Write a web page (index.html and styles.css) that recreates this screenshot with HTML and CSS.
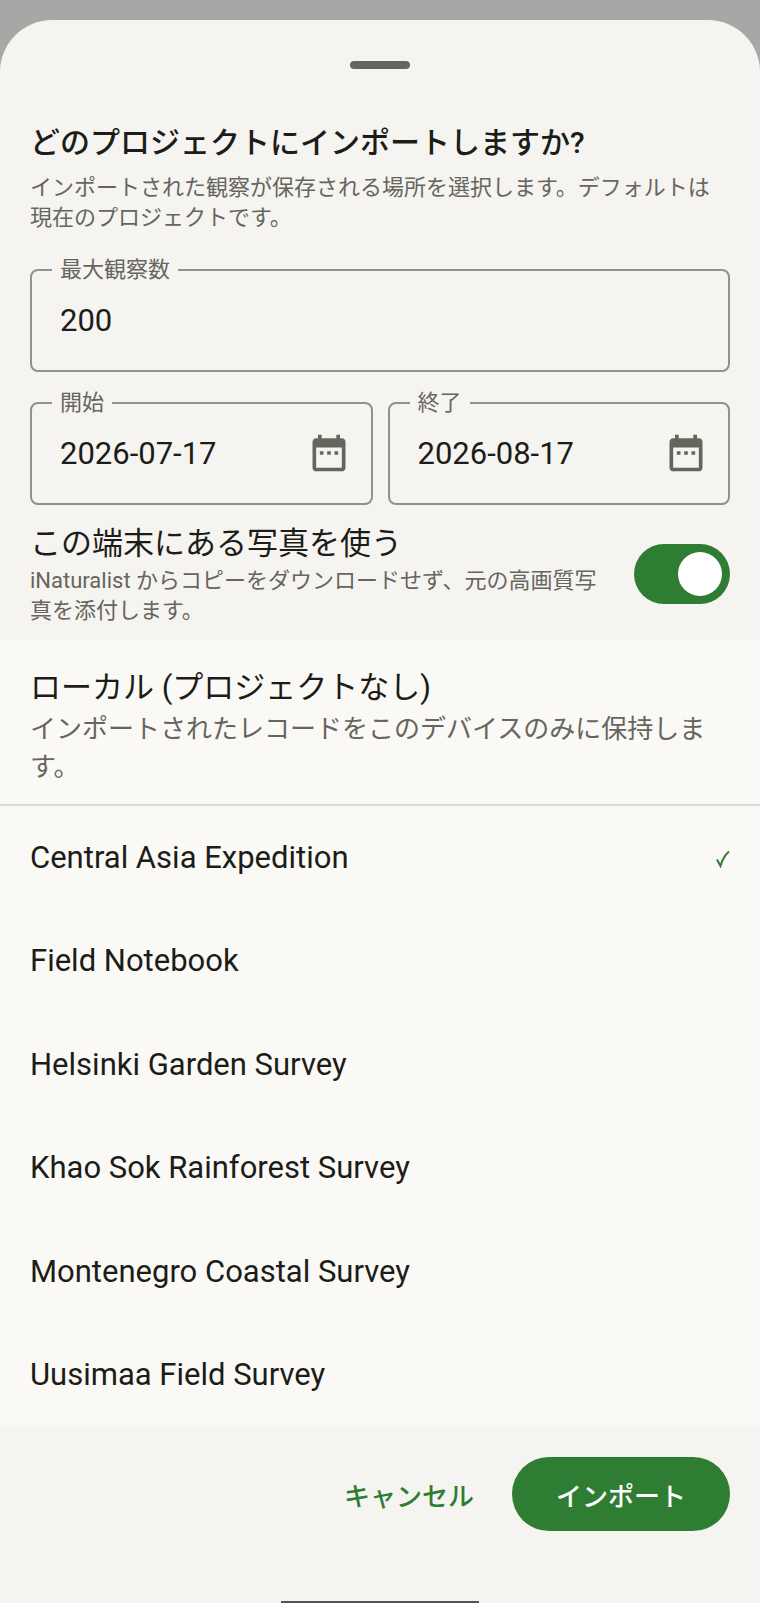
FILE: index.html
```html
<!DOCTYPE html>
<html lang="ja">
<head>
	<meta charset="UTF-8">
	<meta name="viewport" content="width=device-width, initial-scale=1">
	<title>インポート先のプロジェクト</title>
	<link rel="stylesheet" href="styles.css">
</head>
<body>
	<form class="sheet">
		<div class="handle"></div>

		<div class="head">
			<h1>どのプロジェクトにインポートしますか?</h1>
			<p class="small">インポートされた観察が保存される場所を選択します。デフォルトは現在のプロジェクトです。</p>
		</div>

		<div class="fields">
			<fieldset class="field">
				<legend><label for="max">最大観察数</label></legend>
				<input type="text" id="max" inputmode="numeric" value="200">
			</fieldset>
			<div class="dates">
				<fieldset class="field">
					<legend><label for="start">開始</label></legend>
					<input type="text" id="start" value="2026-07-17">
					<button type="button" class="cal" aria-label="開始日を選択">
						<svg viewBox="0 0 24 24"><path d="M9 11H7v2h2v-2zm4 0h-2v2h2v-2zm4 0h-2v2h2v-2zm2-7h-1V2h-2v2H8V2H6v2H5c-1.11 0-1.99.9-1.99 2L3 20c0 1.1.89 2 2 2h14c1.1 0 2-.9 2-2V6c0-1.1-.9-2-2-2zm0 16H5V9h14v11z"/></svg>
					</button>
				</fieldset>
				<fieldset class="field">
					<legend><label for="end">終了</label></legend>
					<input type="text" id="end" value="2026-08-17">
					<button type="button" class="cal" aria-label="終了日を選択">
						<svg viewBox="0 0 24 24"><path d="M9 11H7v2h2v-2zm4 0h-2v2h2v-2zm4 0h-2v2h2v-2zm2-7h-1V2h-2v2H8V2H6v2H5c-1.11 0-1.99.9-1.99 2L3 20c0 1.1.89 2 2 2h14c1.1 0 2-.9 2-2V6c0-1.1-.9-2-2-2zm0 16H5V9h14v11z"/></svg>
					</button>
				</fieldset>
			</div>
		</div>

		<div class="photos">
			<label for="local-photos">
				<span class="body">この端末にある写真を使う</span>
				<span class="small">iNaturalist からコピーをダウンロードせず、元の高画質写真を添付します。</span>
			</label>
			<input type="checkbox" role="switch" class="switch" id="local-photos" checked>
		</div>

		<!-- 保存先の一覧 -->
		<div class="list">
			<button type="button" class="local">
				<span class="body">ローカル (プロジェクトなし)</span>
				<span class="medium">インポートされたレコードをこのデバイスのみに保持します。</span>
			</button>
			<button type="button" class="row body">
				<span>Central Asia Expedition</span>
				<svg class="check" viewBox="0 0 14 20"><path d="M1 11.500L4.500 18C6 12.500 9 7 13 3.500"/></svg>
			</button>
			<button type="button" class="row body">Field Notebook</button>
			<button type="button" class="row body">Helsinki Garden Survey</button>
			<button type="button" class="row body">Khao Sok Rainforest Survey</button>
			<button type="button" class="row body">Montenegro Coastal Survey</button>
			<button type="button" class="row body">Uusimaa Field Survey</button>
		</div>

		<div class="actions">
			<button type="button" class="btn">キャンセル</button>
			<button type="submit" class="btn primary">インポート</button>
		</div>
		<div class="home"></div>
	</form>
</body>
</html>
```
FILE: styles.css
```css
* {
	margin: 0;
	padding: 0;
	box-sizing: border-box;
}

body {
	background-color: #a8a7a5;
	padding-top: 20px;
	min-height: 100vh;
	display: flex;
	color: #1c1c18;
	font-family: Roboto, "Noto Sans CJK JP", sans-serif;
}

button, input {
	font: inherit;
	color: inherit;
	background: none;
	border: 0;
}

button {
	cursor: pointer;
}

.sheet {
	flex: 1;
	min-width: 0;
	display: flex;
	flex-direction: column;
	background-color: #f5f4f0;
	border-radius: 52px 52px 0 0;
	overflow: hidden;
}

.handle {
	width: 60px;
	height: 8px;
	margin: 41px auto 0;
	border-radius: 4px;
	background-color: #66655c;
}

.head {
	padding: 52px 30px 0;
}

h1 {
	font-size: 30px;
	line-height: 44px;
	font-weight: 500;
	margin-bottom: 8px;
}

/* 文字サイズ */
.body {
	font-size: 31px;
	line-height: 44px;
}

.medium {
	font-size: 26px;
	line-height: 38px;
	color: #66655e;
}

.small {
	font-size: 22px;
	line-height: 30px;
	color: #66655e;
}

.fields {
	padding: 22px 30px 0;
}

.field {
	display: flex;
	align-items: center;
	min-width: 0;
	padding: 15px 20px 30px;
	border: 2px solid #929186;
	border-radius: 8px;
}

.field legend {
	padding: 0 8px;
	font-size: 22px;
	line-height: 30px;
	color: #66655e;
}

.field input {
	flex: 1;
	min-width: 0;
	width: 100%;
	height: 40px;
	padding-left: 8px;
	font-size: 31px;
}

.dates {
	display: grid;
	grid-template-columns: 1fr 1fr;
	gap: 15px;
	margin-top: 16px;
}

.cal {
	width: 44px;
	height: 40px;
	display: flex;
	align-items: center;
}

.cal svg {
	flex: none;
	width: 44px;
	height: 44px;
	fill: #66655c;
}

.photos {
	display: flex;
	align-items: center;
	gap: 16px;
	padding: 17px 30px 14px;
}

.photos label {
	flex: 1;
}

.photos span, .local span {
	display: block;
}

.switch {
	appearance: none;
	flex: none;
	width: 96px;
	height: 60px;
	padding: 8px;
	display: flex;
	border-radius: 30px;
	background-color: #929186;
	cursor: pointer;
}

.switch::before {
	content: "";
	width: 44px;
	height: 44px;
	border-radius: 50%;
	background-color: #fff;
}

.switch:checked {
	justify-content: flex-end;
	background-color: #2e7d32;
}

.list {
	flex: 1;
	display: flex;
	flex-direction: column;
	background-color: #faf9f5;
}

.local {
	padding: 26px 30px 18px;
	border-bottom: 2px solid #dcdbd5;
	text-align: left;
}

.row {
	flex: 1;
	display: flex;
	align-items: center;
	justify-content: space-between;
	padding: 16px 30px;
	text-align: left;
}

.check {
	width: 14px;
	height: 20px;
	fill: none;
	stroke: #2e7d32;
	stroke-width: 2;
}

.actions {
	display: flex;
	justify-content: flex-end;
	gap: 16px;
	padding: 30px 30px 70px;
}

.btn {
	height: 74px;
	padding: 0 22px;
	border-radius: 37px;
	font-size: 26px;
	font-weight: 500;
	color: #2e7d32;
}

.primary {
	padding: 0 44px;
	color: #fff;
	background-color: #2e7d32;
}

.home {
	width: 198px;
	height: 2px;
	margin: 0 auto;
	background-color: #55534f;
}
```
